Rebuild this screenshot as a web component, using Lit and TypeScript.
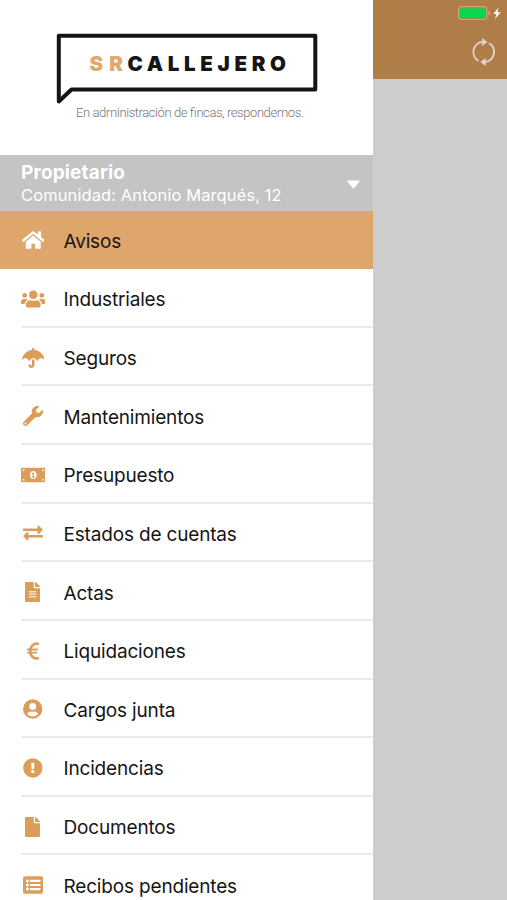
import { LitElement, html, svg, css } from "lit";
import { customElement } from "lit/decorators.js";

const FILE_PATH =
  "M224 136V0H24C10.7 0 0 10.7 0 24v464c0 13.3 10.7 24 24 24h336c13.3 0 24-10.7 24-24V160H248c-13.2 0-24-10.8-24-24zm160-14.1v6.1H256V0h6.1c6.4 0 12.5 2.5 17 7l97.9 98c4.5 4.5 7 10.6 7 16.9z";

const ITEMS = [
  {
    label: "Avisos",
    width: 576,
    icon: svg`<path d="M280.37 148.26L96 300.11V464a16 16 0 0 0 16 16l112.06-.29a16 16 0 0 0 15.92-16V368a16 16 0 0 1 16-16h64a16 16 0 0 1 16 16v95.64a16 16 0 0 0 16 16.05L464 480a16 16 0 0 0 16-16V300L295.67 148.26a12.19 12.19 0 0 0-15.3 0zM571.6 251.47L488 182.56V44.05a12 12 0 0 0-12-12h-56a12 12 0 0 0-12 12v72.61L318.47 43a48 48 0 0 0-61 0L4.34 251.47a12 12 0 0 0-1.6 16.9l25.5 31A12 12 0 0 0 45.15 301l235.22-193.74a12.19 12.19 0 0 1 15.3 0L530.9 301a12 12 0 0 0 16.9-1.6l25.5-31a12 12 0 0 0-1.7-16.93z"/>`,
  },
  {
    label: "Industriales",
    width: 640,
    icon: svg`<path d="M96 224c35.3 0 64-28.7 64-64s-28.7-64-64-64-64 28.7-64 64 28.7 64 64 64zm448 0c35.3 0 64-28.7 64-64s-28.7-64-64-64-64 28.7-64 64 28.7 64 64 64zm32 32h-64c-17.6 0-33.5 7.1-45.1 18.6 40.3 22.1 68.9 62 75.1 109.4h66c17.7 0 32-14.3 32-32v-32c0-35.3-28.7-64-64-64zm-256 0c61.9 0 112-50.1 112-112S381.9 32 320 32 208 82.1 208 144s50.1 112 112 112zm76.8 32h-8.3c-20.8 10-43.9 16-68.5 16s-47.6-6-68.5-16h-8.3C179.6 288 128 339.6 128 403.2V432c0 26.5 21.5 48 48 48h288c26.5 0 48-21.5 48-48v-28.8c0-63.6-51.6-115.2-115.2-115.2zm-223.7-13.4C161.5 263.1 145.6 256 128 256H64c-35.3 0-64 28.7-64 64v32c0 17.7 14.3 32 32 32h65.9c6.3-47.4 34.9-87.3 75.2-109.4z"/>`,
  },
  {
    label: "Seguros",
    width: 576,
    icon: svg`<path d="M575.7 280.8C547.1 144.5 437.3 62.6 320 49.9V32c0-17.7-14.3-32-32-32s-32 14.3-32 32v17.9C138.3 62.6 29.5 144.5.3 280.8c-2.2 10.1 8.5 21.3 18.7 11.4 52-55 107.7-52.4 158.6 37 5.3 9.5 14.9 8.6 19.7 0 20.2-35.4 44.9-73.2 90.7-73.2 58.5 0 88.2 68.8 90.7 73.2 4.8 8.6 14.4 9.5 19.7 0 51-89.5 107.1-91.4 158.6-37 10.3 10 20.9-1.3 18.7-11.4zM256 301.7V432c0 8.8-7.2 16-16 16-7.8 0-13.2-5.3-15.1-10.7-5.9-16.7-24.1-25.4-40.8-19.5-16.7 5.9-25.4 24.2-19.5 40.8 11.2 31.9 41.6 53.3 75.4 53.3 44.1 0 80-35.9 80-80V301.6c-9.1-7.9-19.8-13.6-32-13.6-12.3.1-22.4 4.8-32 13.7z"/>`,
  },
  {
    label: "Mantenimientos",
    width: 512,
    icon: svg`<path d="M507.73 109.1c-2.24-9.03-13.54-12.09-20.12-5.51l-74.36 74.36-67.88-11.31-11.31-67.88 74.36-74.36c6.62-6.62 3.43-17.9-5.66-20.16-47.38-11.74-99.55.91-136.58 37.93-39.64 39.64-50.55 97.1-34.05 147.2L18.74 402.76c-24.99 24.99-24.99 65.51 0 90.5 24.99 24.99 65.51 24.99 90.5 0l213.21-213.21c50.12 16.71 107.47 5.68 147.37-34.22 37.07-37.07 49.7-89.32 37.91-136.73zM64 472c-13.25 0-24-10.75-24-24 0-13.26 10.75-24 24-24s24 10.74 24 24c0 13.25-10.75 24-24 24z"/>`,
  },
  {
    label: "Presupuesto",
    width: 640,
    icon: svg`<rect y="64" width="640" height="384" rx="28"/>
      <g fill="#fff"><ellipse cx="320" cy="256" rx="86" ry="102"/>
      <path d="M48 112h48a48 48 0 0 1-48 48zM592 112h-48a48 48 0 0 0 48 48zM48 400h48a48 48 0 0 0-48-48zM592 400h-48a48 48 0 0 1 48-48z"/></g>
      <path d="M288 204l26-16h24v112h18v28h-72v-28h18v-72l-14 4z"/>`,
  },
  {
    label: "Estados de cuentas",
    width: 512,
    icon: svg`<path d="M12 140h360V96c0-22 25-32 40-17l84 80c10 10 10 24 0 34l-84 80c-15 14-40 4-40-17v-52H12c-7 0-12-5-12-12v-40c0-7 5-12 12-12zM500 308H140v-52c0-21-25-31-40-17l-84 80c-10 10-10 24 0 34l84 80c15 15 40 5 40-17v-44h360c7 0 12-5 12-12v-40c0-7-5-12-12-12z"/>`,
  },
  {
    label: "Actas",
    width: 384,
    icon: svg`<path d="${FILE_PATH}"/>
      <path fill="#fff" opacity=".7" d="M96 228h192v40H96zM96 292h192v40H96zM96 356h192v40H96z"/>`,
  },
  {
    label: "Liquidaciones",
    width: 320,
    icon: svg`<path fill="none" stroke="currentColor" stroke-width="66" d="M304 80C202 42 92 98 85 256s115 218 224 176"/>
      <path fill="none" stroke="currentColor" stroke-width="46" stroke-linecap="round" d="M22 218h238M22 298h222"/>`,
  },
  {
    label: "Cargos junta",
    width: 496,
    icon: svg`<circle cx="248" cy="256" r="248"/>
      <circle fill="#fff" cx="248" cy="192" r="88"/>
      <path fill="#fff" d="M106 383c20-37 58-63 103-63 12 0 22 8 39 8s27-8 39-8c45 0 83 26 103 63-34 40-85 65-142 65s-108-25-142-65z"/>`,
  },
  {
    label: "Incidencias",
    width: 504,
    icon: svg`<circle cx="252" cy="256" r="248"/>
      <path fill="#fff" d="M222 120h60c8 0 13 6 12 13l-8 144c0 6-5 11-12 11h-44c-7 0-12-5-12-11l-8-144c-1-7 4-13 12-13z"/>
      <circle fill="#fff" cx="252" cy="348" r="44"/>`,
  },
  { label: "Documentos", width: 384, icon: svg`<path d="${FILE_PATH}"/>` },
  {
    label: "Recibos pendientes",
    width: 512,
    icon: svg`<rect y="32" width="512" height="448" rx="48"/>
      <g fill="#fff"><circle cx="112" cy="152" r="38"/><circle cx="112" cy="256" r="38"/><circle cx="112" cy="360" r="38"/>
      <rect x="176" y="124" width="270" height="56" rx="12"/><rect x="176" y="228" width="270" height="56" rx="12"/><rect x="176" y="332" width="270" height="56" rx="12"/></g>`,
  },
];

@customElement("app-root")
export class AppRoot extends LitElement {
  static styles = css`
    :host {
      display: flex;
      width: 507px;
      height: 900px;
      overflow: hidden;
      background: #cdcdcd;
      font-family: Inter, "Liberation Sans", sans-serif;
      color: #151515;
    }
    .drawer {
      width: 372.5px;
      flex: none;
      background: #fff;
    }
    .logo {
      display: block;
      width: 372px;
      height: 155px;
    }
    .brand {
      font: 900 20.5px Inter, sans-serif;
    }
    .tagline {
      font: 300 13px Roboto, sans-serif;
    }
    .account {
      display: flex;
      align-items: center;
      justify-content: space-between;
      box-sizing: border-box;
      height: 55.5px;
      padding: 2px 13px 0 21px;
      background: #c4c4c4;
      color: #fff;
    }
    .role {
      font-size: 19px;
      font-weight: 700;
      line-height: 23px;
      letter-spacing: 0.15px;
    }
    .community {
      font-size: 16.5px;
      line-height: 22px;
      letter-spacing: 0.1px;
      white-space: nowrap;
    }
    .caret {
      width: 13px;
      height: 9px;
      margin-top: 2px;
    }
    .item {
      display: flex;
      height: 58.64px;
      padding-left: 20.5px;
    }
    .selected {
      background: #dfa66c;
    }
    .glyph {
      display: flex;
      align-items: center;
      justify-content: center;
      width: 24.5px;
      padding-top: 3px;
      flex: none;
      color: #dc9d58;
    }
    .selected .glyph {
      color: #fff;
    }
    .icon {
      display: block;
      height: 20px;
      fill: currentColor;
    }
    .row {
      display: flex;
      flex: 1;
      box-sizing: border-box;
      border-bottom: 2px solid #ebebec;
    }
    .selected .row {
      border-color: transparent;
    }
    .label {
      padding-left: 18.5px;
      align-self: center;
      padding-top: 5px;
      font-size: 19px;
      letter-spacing: -0.17px;
      white-space: nowrap;
    }
    .behind {
      flex: 1;
    }
    .toolbar {
      display: flex;
      flex-direction: column;
      align-items: flex-end;
      height: 79px;
      background: #af7d47;
    }
    .battery {
      width: 50px;
      height: 26px;
    }
    .refresh {
      width: 28px;
      height: 30px;
      margin: 11px 9px 0 0;
    }
  `;

  render() {
    return html`
      <nav class="drawer">
        <svg class="logo" viewBox="0 0 372 155">
          <path d="M58.8 35.7H315.3V89.5H71.5L58.8 101.5Z" fill="none" stroke="#151515" stroke-width="4" stroke-linejoin="round" />
          <text class="brand" x="89.5" y="70.8" textLength="33.5" fill="#dfaa70">SR</text>
          <text class="brand" x="127.5" y="70.8" textLength="158.5" fill="#151515">CALLEJERO</text>
          <text class="tagline" x="76" y="117.3" textLength="228" fill="#777">En administración de fincas, respondemos.</text>
        </svg>
        <div class="account">
          <div>
            <div class="role">Propietario</div>
            <div class="community">Comunidad: Antonio Marqués, 12</div>
          </div>
          <svg class="caret" viewBox="0 0 13 9">
            <path fill="#fff" d="M1 .5h11q1 0 .6.9L7.3 8q-.8 1-1.6 0L.4 1.4Q0 .5 1 .5z" />
          </svg>
        </div>
        ${ITEMS.map(
          (item, i) => html`
            <div class="item ${i === 0 ? "selected" : ""}">
              <div class="row">
                <span class="glyph"><svg class="icon" viewBox="0 0 ${item.width} 512">${item.icon}</svg></span>
                <span class="label">${item.label}</span>
              </div>
            </div>
          `
        )}
      </nav>
      <div class="behind">
        <div class="toolbar">
          <svg class="battery" viewBox="457 0 50 26">
            <rect x="458.6" y="6.7" width="28.2" height="12.8" rx="3" fill="none" stroke="#d3a47a" stroke-width="1.2" />
            <rect x="460" y="8.2" width="25.3" height="10" rx="1.5" fill="#04d84f" />
            <path d="M488.3 11q1.8.5 1.8 2.2t-1.8 2.2z" fill="#d3a47a" />
            <path d="M498.6 7.5l-5.3 6.5h3.2l-1.7 5.2 6-7h-3.4z" fill="#fff" />
          </svg>
          <svg class="refresh" viewBox="470 37 28 30" fill="none" stroke="#dfd2c5" stroke-width="1.9">
            <path d="M478.6 61A10.3 10.3 0 0 1 482.5 41.8M489.2 43.2A10.3 10.3 0 0 1 485.2 62.1" />
            <path d="M482 38l5.6 4-5.6 4zM485.8 58l-5.6 4 5.6 4z" fill="#dfd2c5" stroke="none" />
          </svg>
        </div>
      </div>
    `;
  }
}
